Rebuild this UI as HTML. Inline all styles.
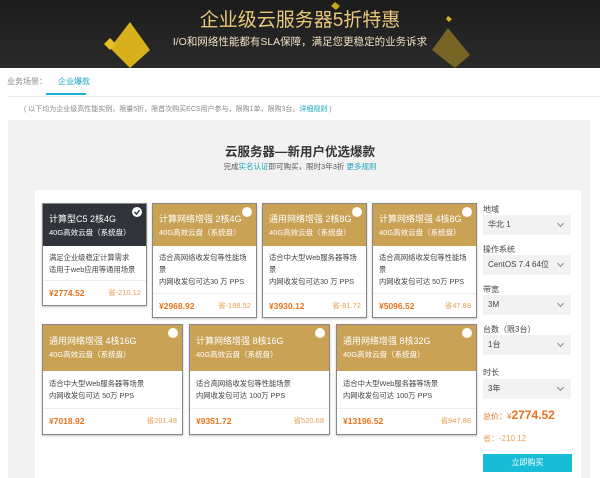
<!DOCTYPE html><html><head><meta charset="utf-8"><style>
*{margin:0;padding:0;box-sizing:border-box}
body{width:600px;height:478px;overflow:hidden;background:#fff;font-family:"Liberation Sans","Noto Sans CJK SC",sans-serif;position:relative;color:#333}
.a{position:absolute}
.ban{left:0;top:0;width:600px;height:68px;background:linear-gradient(#1c1c1c,#2a2a2a)}
.card{position:absolute;background:#fff;border:1px solid #888;box-shadow:0 1px 2px rgba(0,0,0,.25);overflow:hidden}
.hd{background:#c9a256;color:#fff;height:42px;padding:8px 0 0 6px;font-size:9px;line-height:14px;position:relative;white-space:nowrap}
.hd small{font-size:7.5px;display:block}
.hd i{position:absolute;right:4px;top:3px;width:10px;height:10px;border-radius:50%;background:#fff}
.bd{font-size:7.3px;color:#444;line-height:12px;padding:6px 6px;border-bottom:1px solid #eee;white-space:nowrap}
.pr{font-size:8.5px;color:#e8731c;font-weight:bold;padding:0 6px;position:relative;height:24px;line-height:24px}
.pr span{position:absolute;right:5px;font-weight:normal;font-size:7.5px;color:#e8a050}
.lab{font-size:8px;color:#444;left:483px}
.sel{left:483px;width:88px;height:20px;background:#f2f2f2;font-size:8px;color:#444;line-height:20px;padding-left:5px}
.sel:after{content:"";position:absolute;right:8px;top:6px;width:4px;height:4px;border-right:1px solid #888;border-bottom:1px solid #888;transform:rotate(45deg)}
</style></head><body>
<div class="a ban"></div>
<svg class="a" style="left:0;top:0" width="600" height="68">
<polygon points="130,22 150,50 130,68 110,48" fill="#d8b01c"/>
<polygon points="110,38 116,44 110,50 104,44" fill="#e6c020"/>
<polygon points="448,28 470,55 455,68 432,50" fill="#8a7424" opacity=".8"/>
<polygon points="448,16 452,19 449,22 446,19" fill="#d8b01c"/>
<polygon points="335,2 340,6 336,10 331,6" fill="#c8a41a"/>
</svg>
<div class="a" style="left:0;top:8px;width:600px;text-align:center;color:#e9c77a;font-size:19px;line-height:26px">企业级云服务器5折特惠</div>
<div class="a" style="left:0;top:34px;width:600px;text-align:center;color:#f0e0c0;font-size:10.5px;line-height:16px">I/O和网络性能都有SLA保障，满足您更稳定的业务诉求</div>
<div class="a" style="left:7px;top:76px;font-size:8px;color:#888">业务场景：</div>
<div class="a" style="left:58px;top:76px;font-size:8px;color:#17a2c4">企业爆款</div>
<div class="a" style="left:46px;top:93px;width:40px;height:2px;background:#17b5d4"></div>
<div class="a" style="left:8px;top:96px;width:592px;height:1px;background:#e8e8e8"></div>
<div class="a" style="left:24px;top:104px;font-size:7px;color:#888">( 以下均为企业级高性能实例，限量5折，限首次购买ECS用户参与，限购1单，限购3台。<span style="color:#17a2c4">详细规则</span> )</div>
<div class="a" style="left:8px;top:120px;width:582px;height:358px;background:#f2f2f2"></div>
<div class="a" style="left:0;top:145px;width:600px;text-align:center;font-size:12.5px;line-height:15px;font-weight:bold;color:#333">云服务器—新用户优选爆款</div>
<div class="a" style="left:0;top:162px;width:600px;text-align:center;font-size:7.5px;line-height:10px;color:#555">完成<span style="color:#17a2c4">实名认证</span>即可购买，限时3年3折 <span style="color:#17a2c4">更多规则</span></div>
<div class="a" style="left:35px;top:190px;width:546px;height:288px;background:#fff"></div>

<div class="card" style="left:42px;top:203px;width:105px;height:103px"><div class="hd" style="background:#30343a">计算型C5 2核4G<small>40G高效云盘（系统盘）</small></div><div class="bd" style="height:35px">满足企业级稳定计算需求<br>适用于web应用等通用场景</div><div class="pr">¥2774.52<span>省-210.12</span></div></div>
<div class="card" style="left:152px;top:203px;width:105px;height:115px"><div class="hd">计算网络增强 2核4G<small>40G高效云盘（系统盘）</small><i></i></div><div class="bd" style="height:48px">适合高网络收发包等性能场<br>景<br>内网收发包可达30 万 PPS</div><div class="pr">¥2968.92<span>省-188.52</span></div></div>
<div class="card" style="left:262px;top:203px;width:105px;height:115px"><div class="hd">通用网络增强 2核8G<small>40G高效云盘（系统盘）</small><i></i></div><div class="bd" style="height:48px">适合中大型Web服务器等场<br>景<br>内网收发包可达30 万 PPS</div><div class="pr">¥3930.12<span>省-81.72</span></div></div>
<div class="card" style="left:372px;top:203px;width:105px;height:115px"><div class="hd">计算网络增强 4核8G<small>40G高效云盘（系统盘）</small><i></i></div><div class="bd" style="height:48px">适合高网络收发包等性能场<br>景<br>内网收发包可达 50万 PPS</div><div class="pr">¥5096.52<span>省47.88</span></div></div>
<div class="card" style="left:42px;top:324px;width:141px;height:111px"><div class="hd" style="height:46px;padding-top:9px">通用网络增强 4核16G<small>40G高效云盘（系统盘）</small><i></i></div><div class="bd" style="height:38px;padding-top:7px">适合中大型Web服务器等场景<br>内网收发包可达 50万 PPS</div><div class="pr">¥7018.92<span>省261.48</span></div></div>
<div class="card" style="left:189px;top:324px;width:141px;height:111px"><div class="hd" style="height:46px;padding-top:9px">计算网络增强 8核16G<small>40G高效云盘（系统盘）</small><i></i></div><div class="bd" style="height:38px;padding-top:7px">适合高网络收发包等性能场景<br>内网收发包可达 100万 PPS</div><div class="pr">¥9351.72<span>省520.68</span></div></div>
<div class="card" style="left:336px;top:324px;width:141px;height:111px"><div class="hd" style="height:46px;padding-top:9px">通用网络增强 8核32G<small>40G高效云盘（系统盘）</small><i></i></div><div class="bd" style="height:38px;padding-top:7px">适合中大型Web服务器等场景<br>内网收发包可达 100万 PPS</div><div class="pr">¥13196.52<span>省947.88</span></div></div>
<svg class="a" style="left:131px;top:206px" width="12" height="12"><circle cx="6" cy="6" r="5" fill="#fff"/><path d="M3.5 6 L5.5 8 L8.5 4" stroke="#30343a" stroke-width="1.4" fill="none"/></svg>

<div class="a lab" style="top:204px">地域</div><div class="a sel" style="top:215px">华北 1</div>
<div class="a lab" style="top:244px">操作系统</div><div class="a sel" style="top:255px">CentOS 7.4 64位</div>
<div class="a lab" style="top:284px">带宽</div><div class="a sel" style="top:295px">3M</div>
<div class="a lab" style="top:324px">台数（限3台）</div><div class="a sel" style="top:335px">1台</div>
<div class="a lab" style="top:367px">时长</div><div class="a sel" style="top:379px">3年</div>
<div class="a" style="left:483px;top:408px;font-size:8px;color:#e8731c">总价：¥<b style="font-size:12px">2774.52</b></div>
<div class="a" style="left:483px;top:433px;font-size:8px;color:#e8a050">省：-210.12</div>
<div class="a" style="left:483px;top:454px;width:89px;height:18px;background:#19bcd6;color:#fff;font-size:8px;text-align:center;line-height:18px">立即购买</div>
</body></html>
